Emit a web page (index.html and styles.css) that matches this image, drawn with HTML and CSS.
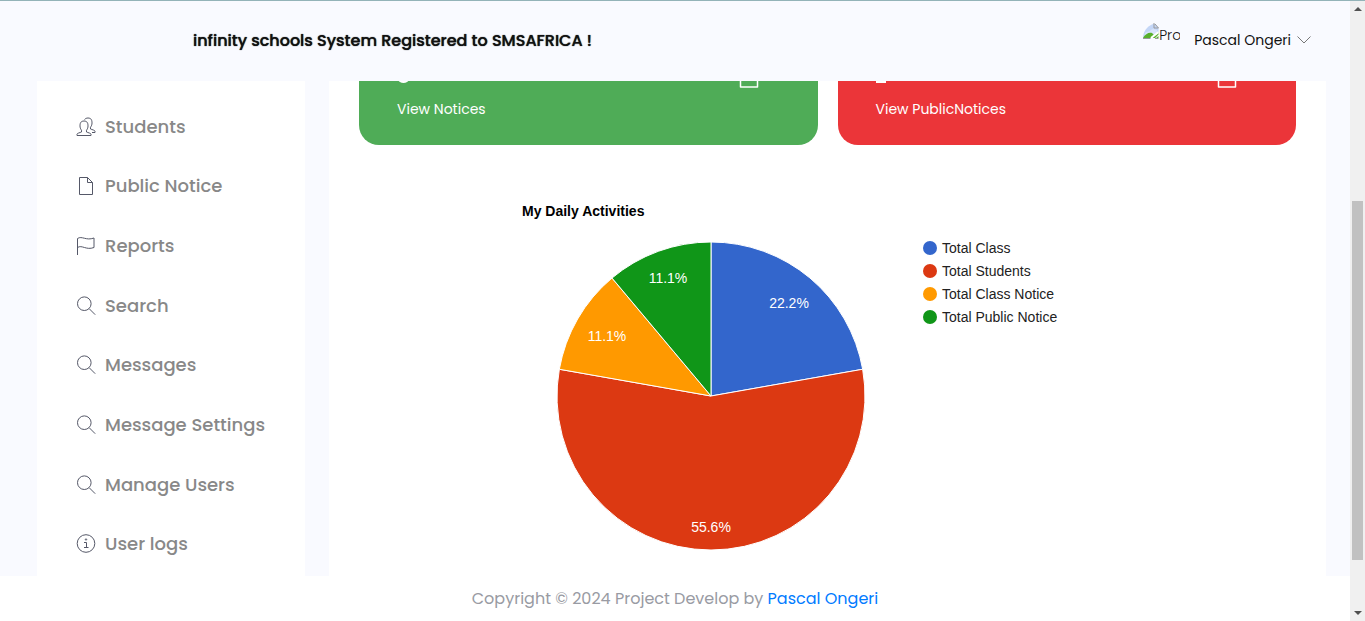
FILE: index.html
```html
<!DOCTYPE html>
<html lang="en">
<head>
<meta charset="utf-8">
<meta name="viewport" content="width=device-width, initial-scale=1">
<title>SMSAFRICA Dashboard</title>
<link rel="stylesheet" href="styles.css">
</head>
<body>
<svg class="sprite" width="0" height="0" aria-hidden="true">
  <symbol id="search" viewBox="0 0 20 20"><circle cx="8.300" cy="7.700" r="6.800"/><path d="M13.200 12.700l6 6"/></symbol>
  <symbol id="file" viewBox="0 0 20 20"><path d="M3.500 1.500h8l5 5v12h-13zM11.500 1.500v5h5"/></symbol>
</svg>
<div class="window">
  <div class="page">
    <header class="header">
      <h1 class="brand">infinity schools System Registered to SMSAFRICA !</h1>
      <button class="user" type="button">
        <span class="avatar">
          <svg width="16" height="16" viewBox="0 0 16 16" aria-hidden="true">
            <path d="M0 15C0 9 4 3 10 1h2l3.500 4v5L6 15z" fill="#c4d6f7"/>
            <path d="M2 10c2-2 5-1 6-3 2-2 5 0 6 0v3l-6 5H1z" fill="#fff" opacity=".35"/>
            <path d="M0 15c2-4 6-6 9-5l2 2-3 3z" fill="#58b02c"/>
            <path d="M9 15l6.500-6v2.500L12 15zM13 15l2.500-2v2z" fill="#58b02c"/>
            <path d="M8 15l7.500-6" stroke="#fff" stroke-width="2"/>
            <path d="M0 15.500h7.500M12 15.500h3.500M10 1h2l3.500 4H11V2" fill="none" stroke="#999"/>
          </svg><span>Pro</span>
        </span>
        <span class="user-name">Pascal Ongeri</span>
        <svg class="chevron" width="14" height="8" viewBox="0 0 14 8" aria-hidden="true"><path d="M.5.500L7 7 13.500.500"/></svg>
      </button>
    </header>
    <div class="body">
      <nav class="sidebar">
        <a class="item" href="#"><svg class="icon" viewBox="0 0 20 20"><path d="M1 18.500v-1.300c0-1 3-1.500 4.500-2.200v-1.800C4.500 12 4 10.500 4 9c0-2.500.5-5 4-5s4 2.500 4 5c0 1.500-.5 3-1.500 4.200V15c1.500.700 4.500 1.200 4.500 2.200v1.300z"/><path d="M8.500 2.500C9.500 1.500 10.500 1 12 1c3.500 0 4 2.500 4 5 0 1.500-.5 3-1.500 4.200V12c1.500.7 4.500 1.200 4.500 2.200v1.300h-3"/></svg>Students</a>
        <a class="item" href="#"><svg class="icon"><use href="#file"/></svg>Public Notice</a>
        <a class="item" href="#"><svg class="icon" viewBox="0 0 20 20"><path d="M1.500 19V2.500C6-.5 10 5 18 2v9.500C10 14.500 6 8.500 1.500 11.500"/></svg>Reports</a>
        <a class="item" href="#"><svg class="icon"><use href="#search"/></svg>Search</a>
        <a class="item" href="#"><svg class="icon"><use href="#search"/></svg>Messages</a>
        <a class="item" href="#"><svg class="icon"><use href="#search"/></svg>Message Settings</a>
        <a class="item" href="#"><svg class="icon"><use href="#search"/></svg>Manage Users</a>
        <a class="item" href="#"><svg class="icon" viewBox="0 0 20 20"><circle cx="10" cy="9.500" r="8.800"/><path d="M8 8.500h2.500v5M8 13.500h4.500"/><circle cx="10" cy="5.500" r=".7"/></svg>User logs</a>
      </nav>
      <main class="main">
        <div class="cards">
          <section class="card card-green">
            <div class="card-top">
              <svg width="12" height="3" viewBox="0 0 12 3" aria-hidden="true"><ellipse cx="6.500" cy="-1" rx="5" ry="3" fill="#fff"/></svg>
              <svg width="20" height="7" viewBox="0 0 20 7" aria-hidden="true"><path class="doc" d="M1.500 0v6h17V0"/></svg>
            </div>
            <a class="card-link" href="#">View Notices</a>
          </section>
          <section class="card card-red">
            <div class="card-top">
              <svg width="12" height="3" viewBox="0 0 12 3" aria-hidden="true"><path d="M0 0h10v2H0z" fill="#fff"/></svg>
              <svg width="20" height="7" viewBox="0 0 20 7" aria-hidden="true"><path class="doc" d="M1.500 0v6h17V0"/></svg>
            </div>
            <a class="card-link" href="#">View PublicNotices</a>
          </section>
        </div>
        <figure class="chart">
          <figcaption class="chart-title">My Daily Activities</figcaption>
          <div class="chart-body">
            <svg class="pie" width="308" height="308" viewBox="0 0 308 308" role="img" aria-label="My Daily Activities">
              <path class="slice" fill="#3366cc" d="M154 154V0A154 154 0 0 1 305.660 127.260z"/>
              <path class="slice" fill="#dc3912" d="M154 154L305.660 127.260A154 154 0 1 1 2.340 127.260z"/>
              <path class="slice" fill="#ff9900" d="M154 154L2.340 127.260A154 154 0 0 1 55.010 36.030z"/>
              <path class="slice" fill="#109618" d="M154 154L55.010 36.030A154 154 0 0 1 154 0z"/>
              <text x="232" y="66">22.2%</text>
              <text x="154" y="290">55.6%</text>
              <text x="50" y="99">11.1%</text>
              <text x="111" y="41">11.1%</text>
            </svg>
            <ul class="legend">
              <li class="key key-blue">Total Class</li>
              <li class="key key-red">Total Students</li>
              <li class="key key-orange">Total Class Notice</li>
              <li class="key key-green">Total Public Notice</li>
            </ul>
          </div>
        </figure>
      </main>
    </div>
    <footer class="footer"><p>Copyright © 2024 Project Develop by <a href="#">Pascal Ongeri</a></p></footer>
  </div>
  <div class="scrollbar" aria-hidden="true">
    <svg width="8" height="4" viewBox="0 0 8 4"><path d="M4 0l4 4H0z"/></svg>
    <div class="track"><div class="thumb"></div></div>
    <svg width="8" height="4" viewBox="0 0 8 4"><path d="M0 0h8L4 4z"/></svg>
  </div>
</div>
</body>
</html>
```
FILE: styles.css
```css
* { box-sizing: border-box; }
body {
  margin: 0;
  background: #fff;
  color: #111;
  font-family: Poppins, Inter, sans-serif;
}
a { text-decoration: none; }
.sprite { position: absolute; }
.window {
  display: grid;
  grid-template-columns: minmax(0, 1fr) 15px;
  min-height: 100vh;
  border-top: 1px solid #93b3b8;
}
.page { display: flex; flex-direction: column; }

.header {
  display: flex;
  align-items: center;
  justify-content: space-between;
  height: 80px;
  padding: 0 39px 0 193px;
  background: #f9faff;
}
.brand {
  margin: 0;
  font-size: 16px;
  line-height: 24px;
  font-weight: 500;
  text-shadow: 0 0 1px #111;
}
.user {
  display: flex;
  align-items: center;
  padding: 0 0 2px;
  border: 0;
  background: none;
  color: #111;
  font: inherit;
  font-size: 14px;
  line-height: 24px;
}
.avatar {
  display: flex;
  align-items: flex-start;
  width: 37px;
  margin: 0 14px 10px 0;
  overflow: hidden;
  font-size: 14px;
  font-weight: 300;
}
.avatar svg { flex: none; }
.chevron { margin-left: 6px; fill: none; stroke: #777; }

.body {
  flex: 1;
  display: grid;
  grid-template-columns: 268px minmax(0, 1fr);
  gap: 24px;
  padding: 0 24px 0 37px;
  background: #f9faff;
}
.sidebar {
  display: grid;
  grid-auto-rows: 1fr;
  padding: 16px 0 2px 39px;
  background: #fff;
}
.item {
  display: flex;
  align-items: center;
  gap: 9px;
  color: #888;
  font-size: 18px;
  line-height: 28px;
  font-weight: 500;
}
.icon { width: 20px; height: 20px; fill: none; stroke: #555868; }

.main { padding: 0 30px 26px; background: #fff; }
.cards { display: grid; grid-template-columns: 1fr 1fr; gap: 20px; }
.card {
  padding: 0 59px 24px 38px;
  border-radius: 0 0 20px 20px;
  color: #fff;
}
.card-green { background: #4fac57; }
.card-red { background: #eb3539; }
.card-top { display: flex; justify-content: space-between; height: 16px; }
.doc { fill: none; stroke: #fff; stroke-width: 1.5; stroke-linejoin: round; }
.card-link {
  display: block;
  color: #fff;
  font-size: 14px;
  line-height: 24px;
}

.chart {
  max-width: 611px;
  margin: 56px auto 0;
  font-family: "Liberation Sans", Arial, sans-serif;
  font-size: 14px;
}
.chart-title { color: #000; line-height: 20px; font-weight: 700; }
.chart-body {
  display: flex;
  align-items: flex-start;
  gap: 58px;
  padding: 21px 0 0 35px;
}
.pie { flex: none; fill: #fff; text-anchor: middle; }
.slice { stroke: #fff; stroke-width: 1; }
.legend {
  display: grid;
  grid-auto-rows: 23px;
  margin: -6px 0 0;
  padding: 0;
  list-style: none;
}
.key {
  display: flex;
  align-items: center;
  gap: 5px;
  color: #222;
}
.key::before { content: ""; width: 14px; height: 14px; border-radius: 50%; }
.key-blue::before { background: #3366cc; }
.key-red::before { background: #dc3912; }
.key-orange::before { background: #ff9900; }
.key-green::before { background: #109618; }

.footer {
  padding: 11px 0 10px;
  color: #999ba3;
  font-size: 16px;
  line-height: 24px;
  text-align: center;
}
.footer p { margin: 0; }
.footer a { color: #007bff; }

.scrollbar {
  display: flex;
  flex-direction: column;
  align-items: center;
  padding: 6px 0;
  background: #f0f0f0;
  fill: #505050;
}
.track { flex: 1; width: 11px; padding: 190px 0 51px; }
.thumb { height: 100%; background: #c1c1c1; }
```
